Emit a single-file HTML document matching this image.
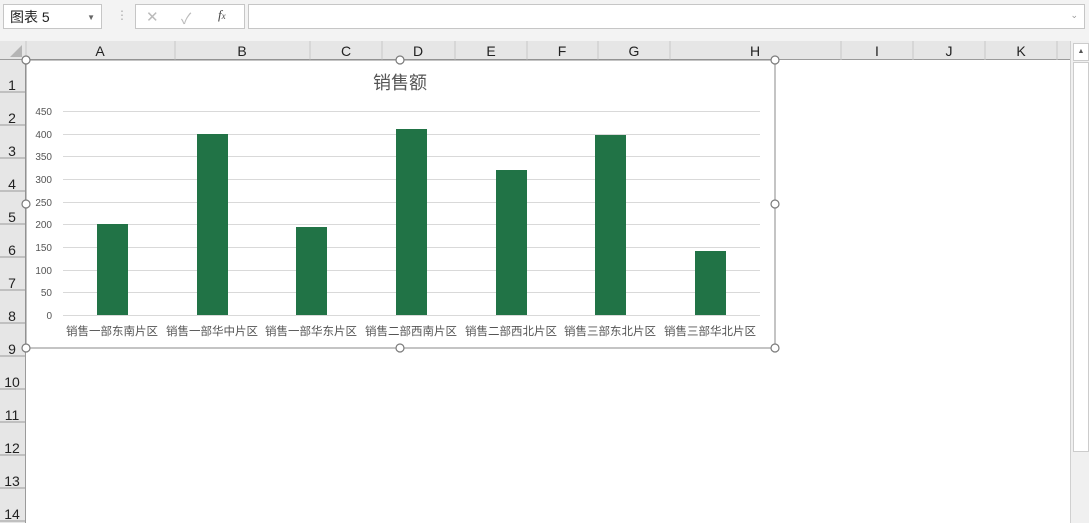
<!DOCTYPE html><html><head><meta charset="utf-8"><style>
body{margin:0;width:1089px;height:523px;overflow:hidden;background:#fff;font-family:"Liberation Sans","Noto Sans CJK SC",sans-serif;position:relative}
.a{position:absolute}
</style></head><body>
<div class="a" style="left:0;top:0;width:1089px;height:41px;background:#f3f3f3;border-bottom:1px solid #d4d4d4"></div>
<div class="a" style="left:3px;top:4px;width:99px;height:25px;background:#fff;border:1px solid #c6c6c6;font-size:14px;line-height:25px;color:#222;padding-left:6px;box-sizing:border-box">图表 5<span style="position:absolute;right:6px;top:0;font-size:8px;color:#666">▼</span></div>
<div class="a" style="left:116px;top:8px;color:#aaa;font-size:12px">⋮</div>
<div class="a" style="left:135px;top:4px;width:110px;height:25px;background:#fff;border:1px solid #c6c6c6;box-sizing:border-box"></div>
<div class="a" style="left:146px;top:8px;color:#bbb;font-size:15px">✕</div>
<div class="a" style="left:181px;top:8px;color:#bbb;font-size:15px">✓</div>
<div class="a" style="left:218px;top:7px;color:#444;font-size:13px;font-style:italic;font-family:'Liberation Serif',serif">f<span style="font-size:9px">x</span></div>
<div class="a" style="left:248px;top:4px;width:837px;height:25px;background:#fff;border:1px solid #c6c6c6;box-sizing:border-box"><span style="position:absolute;right:6px;top:5px;font-size:9px;color:#999">⌄</span></div>
<!-- column header -->
<div class="a" style="left:0;top:41px;width:1070px;height:19px;background:#e6e6e6;border-bottom:1px solid #9b9b9b;box-sizing:border-box"></div>
<div class="a" style="left:0;top:60px;width:25px;height:463px;background:#e6e6e6;border-right:1px solid #9b9b9b"></div>
<svg class="a" style="left:0;top:41px" width="1070" height="482">
<polygon points="22,4 22,16 10,16" fill="#b5b5b5"/>
<g stroke="#c8c8c8">
<line x1="26" y1="0" x2="26" y2="19"/><line x1="175" y1="0" x2="175" y2="19"/><line x1="310" y1="0" x2="310" y2="19"/><line x1="382" y1="0" x2="382" y2="19"/><line x1="455" y1="0" x2="455" y2="19"/><line x1="527" y1="0" x2="527" y2="19"/><line x1="598" y1="0" x2="598" y2="19"/><line x1="670" y1="0" x2="670" y2="19"/><line x1="841" y1="0" x2="841" y2="19"/><line x1="913" y1="0" x2="913" y2="19"/><line x1="985" y1="0" x2="985" y2="19"/><line x1="1057" y1="0" x2="1057" y2="19"/>
</g>
<g stroke="#9b9b9b">
<line x1="0" y1="51" x2="25" y2="51"/><line x1="0" y1="84" x2="25" y2="84"/><line x1="0" y1="117" x2="25" y2="117"/><line x1="0" y1="150" x2="25" y2="150"/><line x1="0" y1="183" x2="25" y2="183"/><line x1="0" y1="216" x2="25" y2="216"/><line x1="0" y1="249" x2="25" y2="249"/><line x1="0" y1="282" x2="25" y2="282"/><line x1="0" y1="315" x2="25" y2="315"/><line x1="0" y1="348" x2="25" y2="348"/><line x1="0" y1="381" x2="25" y2="381"/><line x1="0" y1="414" x2="25" y2="414"/><line x1="0" y1="447" x2="25" y2="447"/><line x1="0" y1="480" x2="25" y2="480"/>
</g>
<g font-size="14" fill="#222" text-anchor="middle" font-family="Liberation Sans">
<text x="100" y="15">A</text><text x="242" y="15">B</text><text x="346" y="15">C</text><text x="418" y="15">D</text><text x="491" y="15">E</text><text x="562" y="15">F</text><text x="634" y="15">G</text><text x="755" y="15">H</text><text x="877" y="15">I</text><text x="949" y="15">J</text><text x="1021" y="15">K</text>
<text x="12" y="49">1</text><text x="12" y="82">2</text><text x="12" y="115">3</text><text x="12" y="148">4</text><text x="12" y="181">5</text><text x="12" y="214">6</text><text x="12" y="247">7</text><text x="12" y="280">8</text><text x="12" y="313">9</text><text x="12" y="346">10</text><text x="12" y="379">11</text><text x="12" y="412">12</text><text x="12" y="445">13</text><text x="12" y="478">14</text>
</g>
</svg>
<!-- scrollbar -->
<div class="a" style="left:1070px;top:41px;width:19px;height:482px;background:#f0f0f0;border-left:1px solid #d0d0d0"></div>
<div class="a" style="left:1073px;top:43px;width:14px;height:16px;background:#fff;border:1px solid #ccc;font-size:7px;text-align:center;line-height:16px;color:#555">▲</div>
<div class="a" style="left:1073px;top:62px;width:14px;height:388px;background:#fff;border:1px solid #ccc"></div>
<!-- chart -->
<svg class="a" style="left:0;top:0" width="1070" height="523">
<rect x="26" y="60" width="749" height="288" fill="#fff" stroke="#8a8a8a"/>
<text x="400" y="89" font-size="18" fill="#555" text-anchor="middle" font-family="Liberation Sans,Noto Sans CJK SC,sans-serif">销售额</text>
<g stroke="#d9d9d9">
<line x1="63" x2="760" y1="111.5" y2="111.5"/><line x1="63" x2="760" y1="134.5" y2="134.5"/><line x1="63" x2="760" y1="156.5" y2="156.5"/><line x1="63" x2="760" y1="179.5" y2="179.5"/><line x1="63" x2="760" y1="202.5" y2="202.5"/><line x1="63" x2="760" y1="224.5" y2="224.5"/><line x1="63" x2="760" y1="247.5" y2="247.5"/><line x1="63" x2="760" y1="270.5" y2="270.5"/><line x1="63" x2="760" y1="292.5" y2="292.5"/><line x1="63" x2="760" y1="315.5" y2="315.5"/>
</g>
<g font-size="10" fill="#555" text-anchor="end" font-family="Liberation Sans">
<text x="52" y="115">450</text><text x="52" y="138">400</text><text x="52" y="160">350</text><text x="52" y="183">300</text><text x="52" y="206">250</text><text x="52" y="228">200</text><text x="52" y="251">150</text><text x="52" y="274">100</text><text x="52" y="296">50</text><text x="52" y="319">0</text>
</g>
<g fill="#217346">
<rect x="97" y="224" width="31" height="91"/><rect x="197" y="134" width="31" height="181"/><rect x="296" y="227" width="31" height="88"/><rect x="396" y="129" width="31" height="186"/><rect x="496" y="170" width="31" height="145"/><rect x="595" y="135" width="31" height="180"/><rect x="695" y="251" width="31" height="64"/>
</g>
<g font-size="11.5" fill="#555" text-anchor="middle" font-family="Noto Sans CJK SC,sans-serif">
<text x="112" y="335">销售一部东南片区</text><text x="212" y="335">销售一部华中片区</text><text x="311" y="335">销售一部华东片区</text><text x="411" y="335">销售二部西南片区</text><text x="511" y="335">销售二部西北片区</text><text x="610" y="335">销售三部东北片区</text><text x="710" y="335">销售三部华北片区</text>
</g>
<g fill="#fff" stroke="#7a7a7a" stroke-width="1.2">
<circle cx="400" cy="60" r="4"/><circle cx="775" cy="60" r="4"/><circle cx="775" cy="204" r="4"/><circle cx="775" cy="348" r="4"/><circle cx="400" cy="348" r="4"/><circle cx="26" cy="348" r="4"/><circle cx="26" cy="204" r="4"/><circle cx="26" cy="60" r="4"/>
</g>
</svg>
</body></html>
